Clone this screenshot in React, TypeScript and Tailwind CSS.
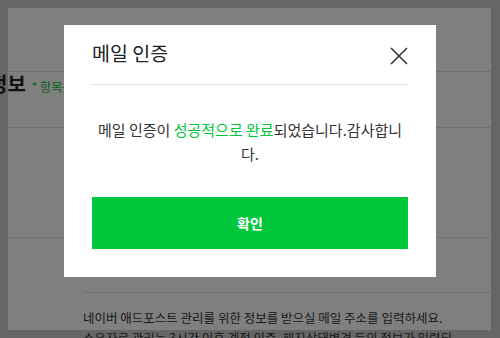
import type { ReactNode } from "react";

const FONT = "font-['Noto_Sans_CJK_KR','Noto_Sans',sans-serif]";

function CloseIcon() {
  return (
    <svg width="18" height="18" viewBox="0 0 18 18" aria-hidden="true">
      <path d="M1 1L17 17M17 1L1 17" stroke="#333333" strokeWidth="1.6" fill="none" />
    </svg>
  );
}

function Modal({ children }: { children: ReactNode }) {
  return (
    <div className="fixed inset-0 z-20 flex justify-center bg-black/50 pt-[25px]">
      <div className="h-[252px] w-[372px] bg-white px-7">{children}</div>
    </div>
  );
}

export default function App() {
  return (
    <div className={`${FONT} relative h-[338px] w-[500px] overflow-hidden bg-[#cccccc] p-2`}>
      {/* page behind the dialog */}
      <div className="h-[322px] w-[483px] bg-white">
        <div className="h-[64px] border-b border-[#dedede]" />
        <div className="h-[56px] border-b border-[#dedede]">
          <div className="-ml-[19px] flex items-baseline gap-[6px] whitespace-nowrap">
            <h2 className="text-[20px] font-bold leading-[24px] text-[#222222]">정보</h2>
            <span className="text-[12px] text-[#00c73c]">* 항목은 필수 입력 사항입니다.</span>
          </div>
        </div>
        <div className="h-[110px] border-b border-[#dedede]" />
        <div className="ml-[75px] h-[55px] border-b border-[#dedede]" />
        <div className="pl-[75px] pt-[15px] text-[12.5px] leading-[20px] text-[#333333] whitespace-nowrap">
          <p>네이버 애드포스트 관리를 위한 정보를 받으실 메일 주소를 입력하세요.</p>
          <p>소유자로 관리는 3시간 이후 계정 인증, 해지상태변경 등의 정보가 입력되</p>
        </div>
      </div>

      <Modal>
        <div className="flex h-[60px] items-center justify-between border-b border-[#e4e4e4] pb-[3px]">
          <h1 className="text-[19.5px] font-normal leading-[28px] text-[#222222]">메일 인증</h1>
          <button className="mt-[6px]" aria-label="닫기">
            <CloseIcon />
          </button>
        </div>
        <p className="pt-[33px] text-center text-[15px] leading-[24px] text-[#333333]">
          메일 인증이 <span className="text-[#00c73c]">성공적으로 완료</span>되었습니다.감사합니다.
        </p>
        <button className="mt-[31px] flex h-[52px] w-full items-center justify-center bg-[#00c73c] text-[14px] font-bold text-white">
          확인
        </button>
      </Modal>
    </div>
  );
}
